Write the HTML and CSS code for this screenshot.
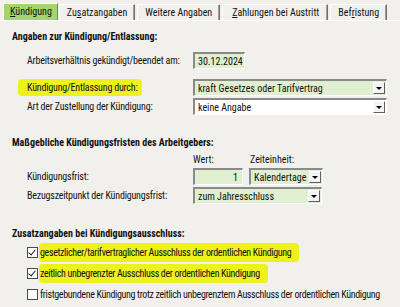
FILE: index.html
```html
<!DOCTYPE html>
<html lang="de">
<head>
<meta charset="utf-8">
<link rel="stylesheet" href="styles.css">
</head>
<body>
<div class="tabs">
  <div class="tab active"><u>K</u>ündigung</div>
  <div class="tab">Zu<u>s</u>atzangaben</div>
  <div class="tab">Weitere An<u>g</u>aben</div>
  <div class="tab"><u>Z</u>ahlungen bei Austritt</div>
  <div class="tab">Bef<u>r</u>istung</div>
</div>
<div class="panel">
  <div class="heading">Angaben zur Kündigung/Entlassung:</div>
  <div class="row r-date">
    <span class="label">Arbeitsverhältnis gekündigt/beendet am:</span>
    <span class="field green date">30.12.2024</span>
  </div>
  <div class="row r-durch">
    <span class="label"><span class="mark">Kündigung/Entlassung durch:</span></span>
    <span class="field green combo wide"><span class="val">kraft Gesetzes oder Tarifvertrag</span><span class="btn"></span></span>
  </div>
  <div class="row r-art">
    <span class="label">Art der Zustellung der Kündigung:</span>
    <span class="field combo wide"><span class="val">keine Angabe</span><span class="btn"></span></span>
  </div>

  <div class="heading h2">Maßgebliche Kündigungsfristen des Arbeitgebers:</div>
  <div class="row colhead">
    <span class="label"></span>
    <span class="ch wert">Wert:</span>
    <span class="ch">Zeiteinheit:</span>
  </div>
  <div class="row r-frist">
    <span class="label">Kündigungsfrist:</span>
    <span class="field green num">1</span>
    <span class="field green combo unit"><span class="val">Kalendertage</span><span class="btn"></span></span>
  </div>
  <div class="row r-bezug">
    <span class="label">Bezugszeitpunkt der Kündigungsfrist:</span>
    <span class="field green combo mid"><span class="val">zum Jahresschluss</span><span class="btn"></span></span>
  </div>

  <div class="heading h3">Zusatzangaben bei Kündigungsausschluss:</div>
  <div class="check c1"><span class="box on"></span><span class="mark">gesetzlicher/tarifvertraglicher Ausschluss der ordentlichen Kündigung</span></div>
  <div class="check c2"><span class="box on"></span><span class="mark">zeitlich unbegrenzter Ausschluss der ordentlichen Kündigung</span></div>
  <div class="check c3"><span class="box"></span><span class="txt">fristgebundene Kündigung trotz zeitlich unbegrenztem Ausschluss der ordentlichen Kündigung</span></div>
</div>
</body>
</html>
```
FILE: styles.css
```css
html, body {
  margin: 0;
  padding: 0;
}
body {
  width: 400px;
  height: 307px;
  overflow: hidden;
  background: #f1f0ec;
  font-family: "Roboto Condensed", "Liberation Sans", Arial, sans-serif;
  font-size: 10px;
  color: #111;
}
.tabs {
  display: flex;
  align-items: flex-end;
  height: 20px;
  padding-left: 3px;
  border-bottom: 1px solid #ffffff;
}
.tab {
  height: 15px;
  line-height: 15px;
  padding: 0 7px 0 7px;
  border-top: 1px solid #ffffff;
  border-left: 1px solid #ffffff;
  border-right: 1px solid #6f6f6f;
  box-shadow: inset -1px 0 0 #a0a0a0;
  margin-right: 2px;
  white-space: nowrap;
}
.tab.active {
  background: #a3d56d;
  height: 16px;
  line-height: 16px;
  padding: 0 5px 0 6px;
  border-right: 1px solid #6f8f50;
  box-shadow: none;
  margin-right: 1px;
}
.tab:nth-child(4) { padding: 0 8px 0 9px; }
.panel {
  padding: 0 0 0 12px;
}
.heading {
  font-weight: bold;
  margin-top: 9px;
  height: 14px;
  line-height: 14px;
}
.h2 { margin-top: 21px; }
.h3 { margin-top: 23px; }
.row {
  display: flex;
  align-items: center;
  margin-left: 15px;
  height: 17px;
  margin-top: 2px;
}
.r-date { margin-top: 8px; }
.r-durch { margin-top: 10px; }
.label {
  width: 166px;
  flex: none;
  white-space: nowrap;
  letter-spacing: -0.2px;
}
.label .mark {
  margin-left: -9px;
  padding: 3px 4px 3px 9px;
}
.mark {
  background: #eef21c;
  border-radius: 4px;
}
.field {
  height: 17px;
  box-sizing: border-box;
  border-top: 2px solid #8a8a8a;
  border-left: 2px solid #8a8a8a;
  border-bottom: 1px solid #ffffff;
  border-right: 1px solid #ffffff;
  background: #ffffff;
  display: flex;
  align-items: center;
  padding-left: 3px;
  white-space: nowrap;
}
.green { background: #e0efcf; }
.date { width: 52px; }
.wide { width: 194px; }
.mid { width: 129px; }
.unit { width: 74px; margin-left: 6px; }
.num { width: 50px; justify-content: flex-end; padding-right: 4px; }
.combo { padding-right: 0; }
.val { flex: 1; }
.btn {
  width: 12px;
  height: 12px;
  margin-right: 1px;
  box-sizing: border-box;
  background: #f4f4f4;
  border-top: 1px solid #ffffff;
  border-left: 1px solid #ffffff;
  border-right: 1px solid #606060;
  border-bottom: 1px solid #606060;
  position: relative;
}
.btn::after {
  content: "";
  position: absolute;
  left: 2px;
  top: 4px;
  border-left: 3px solid transparent;
  border-right: 3px solid transparent;
  border-top: 3px solid #000;
}
.colhead { margin-top: 3px; height: 13px; }
.ch { width: 57px; }
.r-frist { margin-top: 2px; }
.check {
  display: flex;
  align-items: center;
  margin-left: 15px;
  height: 18px;
  margin-top: 3px;
  white-space: nowrap;
  letter-spacing: -0.35px;
}
.c1 { margin-top: 2px; }
.box {
  width: 11px;
  height: 11px;
  box-sizing: border-box;
  border: 1px solid #4b4b4b;
  background: #fff;
  flex: none;
  position: relative;
  margin-right: 1px;
}
.box.on::after {
  content: "";
  position: absolute;
  left: 2px;
  top: 0px;
  width: 3px;
  height: 6px;
  border-right: 1px solid #222;
  border-bottom: 1px solid #222;
  transform: rotate(40deg);
}
.check .mark {
  padding: 4px 8px 4px 1px;
}
.check .txt { padding-left: 1px; }
```
